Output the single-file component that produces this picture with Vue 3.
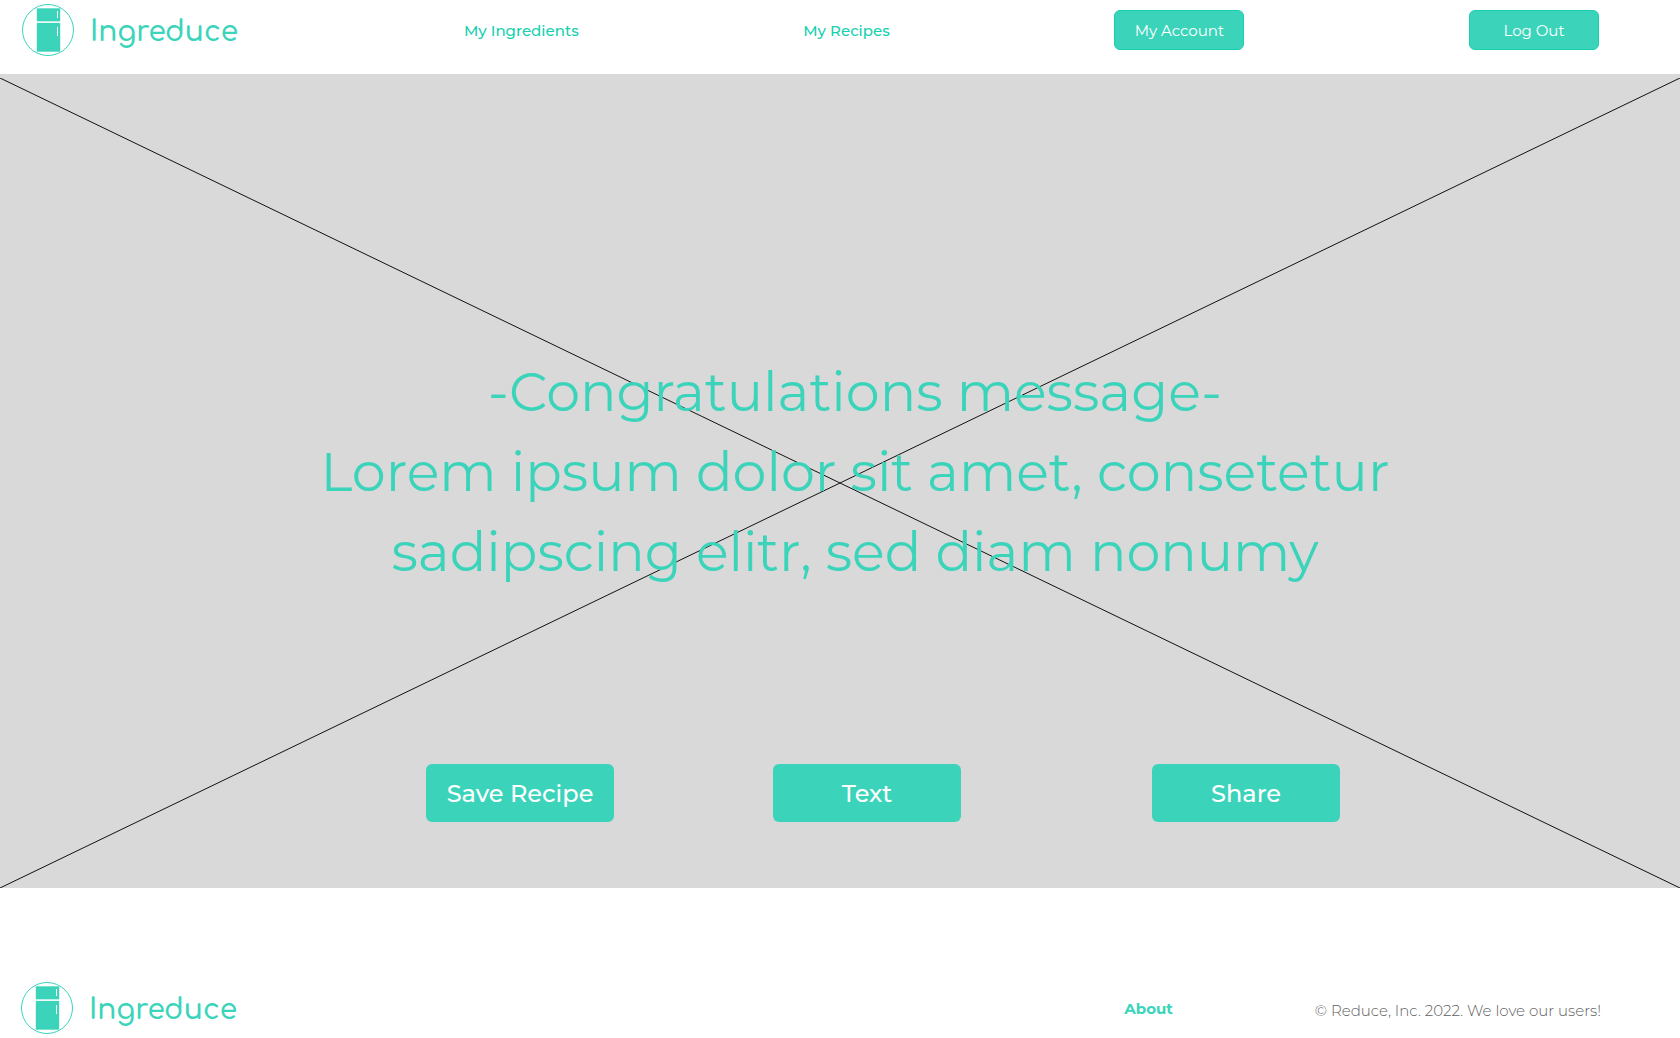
<script setup>
const actions = ['Save Recipe', 'Text', 'Share']
const messageLines = [
  '-Congratulations message-',
  'Lorem ipsum dolor sit amet, consetetur',
  'sadipscing elitr, sed diam nonumy',
]
</script>

<template>
  <div class="page">
    <svg class="symbols" aria-hidden="true">
      <symbol id="fridge" viewBox="0 0 52 52">
        <circle cx="26" cy="26" r="25.5" fill="none" stroke="#3bd4bb" />
        <rect x="14.5" y="4" width="24" height="44" rx="1" fill="#b5eee4" />
        <rect x="15" y="4.5" width="23" height="13" rx="0.5" fill="#3bd4bb" />
        <rect x="15" y="19" width="23" height="28.5" rx="0.5" fill="#3bd4bb" />
        <rect x="14" y="17.5" width="25" height="1.2" fill="#fff" />
        <path d="M35.5 7v7M35.5 23v9" stroke="#fff" fill="none" />
      </symbol>
    </svg>

    <header class="header">
      <a class="brand" href="#">
        <svg class="mark" aria-hidden="true"><use href="#fridge" /></svg>
        <span class="name">Ingreduce</span>
      </a>
      <nav class="nav">
        <a class="link" href="#">My Ingredients</a>
        <a class="link" href="#">My Recipes</a>
        <button class="small-button" type="button">My Account</button>
        <button class="small-button" type="button">Log Out</button>
      </nav>
    </header>

    <main class="hero">
      <svg class="cross" viewBox="0 0 1680 810" preserveAspectRatio="none" aria-hidden="true">
        <path d="M0 0L1680 810M0 810L1680 0" />
      </svg>
      <h1 class="message">
        <span v-for="line in messageLines" :key="line">{{ line }}</span>
      </h1>
      <div class="actions">
        <button v-for="label in actions" :key="label" class="action" type="button">{{ label }}</button>
      </div>
    </main>

    <footer class="footer">
      <a class="brand" href="#">
        <svg class="mark" aria-hidden="true"><use href="#fridge" /></svg>
        <span class="name">Ingreduce</span>
      </a>
      <a class="about" href="#">About</a>
      <p class="copyright">© Reduce, Inc. 2022. We love our users!</p>
    </footer>
  </div>
</template>

<style>
body {
  margin: 0;
  background: #fff;
}
</style>

<style scoped>
.page {
  font-family: Montserrat, Inter, sans-serif;
  color: #3bd4bb;
}
.page * {
  box-sizing: border-box;
}
.symbols {
  display: none;
}
a {
  color: inherit;
  text-decoration: none;
}
button {
  border: 0;
  font-family: inherit;
  color: #fff;
  background: #3bd4bb;
  border-radius: 6px;
  padding: 0;
}
.header {
  display: flex;
  align-items: flex-start;
  padding: 4px 81px 18px 22px;
}
.brand {
  display: flex;
  align-items: center;
  gap: 16px;
  width: 214px;
  height: 52px;
  flex: none;
  font-family: Comfortaa, Quicksand, Inter, sans-serif;
  font-size: 28px;
  line-height: 48px;
  font-weight: 600;
}
.name {
  padding-top: 4px;
}
.mark {
  width: 52px;
  height: 52px;
  flex: none;
}
.nav {
  flex: 1;
  display: flex;
  justify-content: space-between;
  align-items: center;
  height: 52px;
  margin-left: 228px;
}
.link {
  font-size: 15px;
  font-weight: 500;
  color: #16d0b0;
}
.small-button {
  width: 130px;
  height: 40px;
  border: 1px solid #16d0b0;
  font-size: 15px;
}
.hero {
  position: relative;
  background: #d9d9d9;
  padding: 278px 0 66px;
}
.cross {
  position: absolute;
  left: 0;
  top: 4px;
  width: 100%;
  height: calc(100% - 4px);
}
.cross path {
  stroke: #111;
  fill: none;
  vector-effect: non-scaling-stroke;
}
.message {
  position: relative;
  margin: 0;
  padding-left: 30px;
  text-align: center;
  font-size: 54px;
  line-height: 80px;
  font-weight: 400;
}
.message span {
  display: block;
}
.actions {
  position: relative;
  display: grid;
  grid-template-columns: 347fr 379fr 188px;
  margin-top: 172px;
  padding: 0 340px 0 426px;
}
.action {
  width: 188px;
  height: 58px;
  font-size: 24px;
  font-weight: 500;
}
.footer {
  display: flex;
  align-items: center;
  padding: 94px 79px 4px 21px;
}
.about {
  margin-left: auto;
  font-size: 15px;
  font-weight: 700;
}
.copyright {
  margin: 0 0 0 142px;
  padding-top: 4px;
  font-size: 15px;
  font-weight: 300;
  color: #606060;
}
</style>
